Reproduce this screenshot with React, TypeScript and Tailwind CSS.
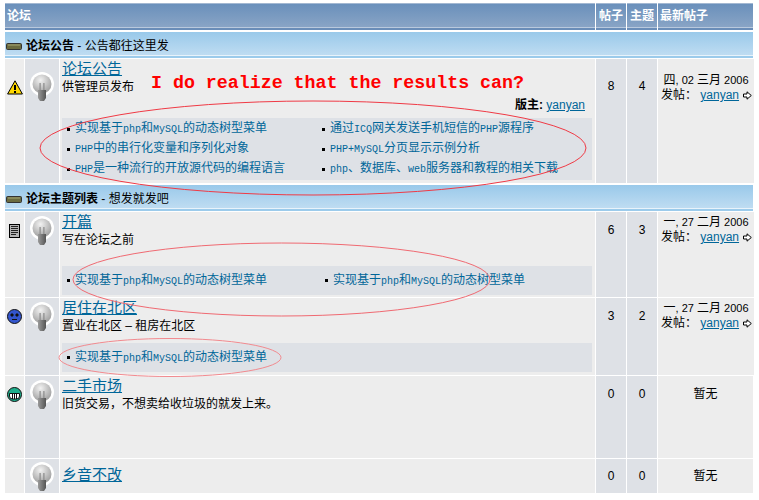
import React from 'react';

const LINK = 'text-[#006699] underline';
const MONO = "'Liberation Mono', monospace";
const HEAD = 'bg-gradient-to-b from-[#6a90bb] to-[#8aa5c6] border-t border-[#a3b8d2] border-b-2 border-b-[#6a8db8] shadow-[inset_0_-1px_0_#b9c9dd]';

// half-width latin next to CJK, like the bitmap font in the screenshot
const Mixed = ({ text }: { text: string }) => (
  <>
    {text.split(/([A-Za-z+]+)/).map((part, i) =>
      /^[A-Za-z+]+$/.test(part) ? (
        <span key={i} className="text-[10px]" style={{ fontFamily: MONO }}>
          {part}
        </span>
      ) : (
        <span key={i}>{part}</span>
      )
    )}
  </>
);

const Bulb = () => (
  <svg width="24" height="30" viewBox="0 0 24 30">
    <defs>
      <radialGradient id="glass" cx="0.42" cy="0.3" r="0.75">
        <stop offset="0" stopColor="#f2f2f2" />
        <stop offset="1" stopColor="#999" />
      </radialGradient>
      <linearGradient id="stem" x1="0" x2="1" y1="0" y2="0">
        <stop offset="0" stopColor="#9a9a9a" />
        <stop offset="1" stopColor="#555" />
      </linearGradient>
    </defs>
    <circle cx="12" cy="12" r="12" fill="#fff" />
    <circle cx="12" cy="12" r="9.5" fill="url(#glass)" />
    <path d="M9.5 11h1.2v7h-1.2zM13.3 11h1.2v7h-1.2z" fill="#8a8a8a" />
    <path d="M8 18h8v8l-2 3h-4l-2-3z" fill="url(#stem)" />
  </svg>
);

const Folder = () => (
  <svg width="16" height="7" viewBox="0 0 16 7" className="shrink-0">
    <rect x="0.5" y="0.5" width="15" height="6" rx="1" fill="#6b6b3f" stroke="#333" />
    <rect x="2" y="1.5" width="12" height="1" fill="#a8a878" />
  </svg>
);

const Warning = () => (
  <svg width="16" height="15" viewBox="0 0 16 15">
    <path d="M8 .8 15.4 14H.6z" fill="#ffd800" stroke="#000" strokeWidth="1" />
    <path d="M7 5h2v5H7zM7 11h2v2H7z" fill="#000" />
  </svg>
);

const Doc = () => (
  <svg width="11" height="14" viewBox="0 0 11 14">
    <rect x="0.5" y="0.5" width="10" height="13" fill="#b5b5b5" stroke="#000" />
    <path d="M2 2.5h7M2 4.5h7M2 6.5h7M2 8.5h7M2 10.5h5" stroke="#222" />
  </svg>
);

const Sad = () => (
  <svg width="15" height="15" viewBox="0 0 15 15">
    <circle cx="7.5" cy="7.5" r="7" fill="#3355cc" stroke="#111" />
    <path d="M4 5h2v2H4zM9 5h2v2H9zM5 10.5h5" fill="#111" stroke="#111" />
  </svg>
);

const Grin = () => (
  <svg width="15" height="15" viewBox="0 0 15 15">
    <circle cx="7.5" cy="7.5" r="7" fill="#1fae8c" stroke="#111" />
    <path d="M2.5 6.5h10v2.5a3 3 0 0 1-3 3h-4a3 3 0 0 1-3-3z" fill="#fff" stroke="#111" />
    <path d="M5.5 6.5v5.5M7.5 6.5v5.5M9.5 6.5v5.5" stroke="#111" />
  </svg>
);

const Arrow = () => (
  <svg width="9" height="9" viewBox="0 0 9 9" className="inline-block ml-1 align-[-1px]">
    <path d="M.5 3h3.5V.8L8.3 4.5 4 8.2V6H.5z" fill="#fff" stroke="#000" />
  </svg>
);

const CatBar = ({ title, desc }: { title: string; desc: string }) => (
  <div className="h-[26px] flex items-center pt-[4px] pl-[1px] gap-1 bg-gradient-to-b from-[#99c9ea] to-[#c0ddf2] border-b-2 border-[#9ccbeb] shadow-[inset_0_-1px_0_#e8f3fb] text-[12px] text-black">
    <Folder />
    <span>
      <b>{title}</b> - {desc}
    </span>
  </div>
);

type Row = {
  h: string;
  icon: React.ReactNode;
  iconTop: string;
  title: string;
  titleTop: string;
  desc?: string;
  mod?: boolean;
  links?: string[];
  linksClass?: string;
  posts: number;
  topics: number;
  numTop: string;
  date?: string;
  dateTop: string;
  bulbTop: string;
};

const DateText = ({ text }: { text: string }) => (
  <>
    {text.split(/([0-9, ]+)/).map((part, i) =>
      /^[0-9, ]+$/.test(part) ? (
        <span key={i} className="text-[11px]">
          {part}
        </span>
      ) : (
        <span key={i}>{part}</span>
      )
    )}
  </>
);

const Last = ({ date, top }: { date?: string; top: string }) =>
  date ? (
    <div className={`${top} pl-[2px] pr-[2px] text-[12px] leading-[15px] text-black`}>
      <div className="text-center">
        <DateText text={date} />
      </div>
      <div className="whitespace-nowrap pl-[1px]">
        发帖： <a className={LINK}>yanyan</a>
        <Arrow />
      </div>
    </div>
  ) : (
    <div className={`${top} text-center text-[12px] text-black`}>暂无</div>
  );

const ForumRow = ({ r }: { r: Row }) => (
  <div className={`grid grid-cols-[19px_34px_535px_30px_30px_1fr] gap-x-[1px] ${r.h}`}>
    <div className={`bg-[#ededed] flex justify-center ${r.iconTop}`}>{r.icon}</div>
    <div className={`bg-[#dee1e6] flex justify-center ${r.bulbTop}`}>
      <Bulb />
    </div>
    <div className={`bg-[#ededed] ${r.titleTop} pl-[2px] pr-[2px] flex flex-col text-[12px] text-black overflow-hidden`}>
      <a className={`${LINK} text-[15px] leading-[18px] self-start`}>{r.title}</a>
      {r.desc && <div className="mt-[2px] leading-[15px]">{r.desc}</div>}
      {r.mod && (
        <div className="mt-[2px] text-right pr-[8px] leading-[16px]">
          <b>版主:</b> <a className={LINK}>yanyan</a>
        </div>
      )}
      {r.links && (
        <div className={`${r.linksClass} grid bg-[#dee1e6] px-[4px] mr-[1px] text-[12px]`}>
          {r.links.map((l, i) => (
            <div key={i} className="flex items-center whitespace-nowrap">
              <span className="w-[3px] h-[3px] bg-black mr-[5px] ml-[1px] shrink-0" />
              <a className="text-[#006699]">
                <Mixed text={l} />
              </a>
            </div>
          ))}
        </div>
      )}
    </div>
    <div className={`bg-[#dee1e6] text-center ${r.numTop} text-[12px] leading-[15px] text-black`}>{r.posts}</div>
    <div className={`bg-[#dee1e6] text-center ${r.numTop} text-[12px] leading-[15px] text-black`}>{r.topics}</div>
    <div className="bg-[#ededed]">
      <Last date={r.date} top={r.dateTop} />
    </div>
  </div>
);

const MENU = '实现基于php和MySQL的动态树型菜单';

const NOTICE: Row = {
  h: 'h-[124px]',
  icon: <Warning />,
  iconTop: 'pt-[21px]',
  title: '论坛公告',
  titleTop: 'pt-[1px]',
  desc: '供管理员发布',
  mod: true,
  linksClass: 'mt-[5px] grid-cols-[255px_1fr] py-[1px] leading-[19px]',
  bulbTop: 'pt-[13px]',
  links: [
    MENU,
    '通过ICQ网关发送手机短信的PHP源程序',
    'PHP中的串行化变量和序列化对象',
    'PHP+MySQL分页显示示例分析',
    'PHP是一种流行的开放源代码的编程语言',
    'php、数据库、web服务器和教程的相关下载',
  ],
  posts: 8,
  topics: 4,
  numTop: 'pt-[20px]',
  date: '四, 02 三月 2006',
  dateTop: 'pt-[14px]',
};

const ROWS: Row[] = [
  { h: 'h-[85px]', icon: <Doc />, iconTop: 'pt-[12px]', title: '开篇', titleTop: 'pt-[1px]', desc: '写在论坛之前', linksClass: 'mt-[18px] grid-cols-[258px_1fr] py-[4.5px] leading-[19px]', bulbTop: 'pt-[4px]', links: [MENU, MENU], posts: 6, topics: 3, numTop: 'pt-[11px]', date: '一, 27 二月 2006', dateTop: 'pt-[3px]' },
  { h: 'h-[77px]', icon: <Sad />, iconTop: 'pt-[11px]', title: '居住在北区', titleTop: 'pt-[1px]', desc: '置业在北区 – 租房在北区', linksClass: 'mt-[9px] grid-cols-[258px_1fr] py-[4.5px] leading-[19px]', bulbTop: 'pt-[4px]', links: [MENU], posts: 3, topics: 2, numTop: 'pt-[11px]', date: '一, 27 二月 2006', dateTop: 'pt-[3px]' },
  { h: 'h-[82px]', icon: <Grin />, iconTop: 'pt-[11px]', title: '二手市场', titleTop: 'pt-[1px]', desc: '旧货交易，不想卖给收垃圾的就发上来。', bulbTop: 'pt-[4px]', posts: 0, topics: 0, numTop: 'pt-[11px]', dateTop: 'pt-[9px]' },
  { h: 'h-[34px]', icon: null, iconTop: 'pt-[11px]', title: '乡音不改', titleTop: 'pt-[7px]', bulbTop: 'pt-[3px]', posts: 0, topics: 0, numTop: 'pt-[10px]', dateTop: 'pt-[8px]' },
];

export default function App() {
  return (
    <div
      className="relative w-[759px] h-[500px] overflow-hidden bg-white pt-[3px] pl-[5px] pr-[6px]"
      style={{ fontFamily: "'Liberation Sans', 'Noto Sans CJK SC', sans-serif" }}
    >
      <div className="grid grid-cols-[590px_30px_30px_1fr] gap-x-[1px] h-[27px] text-[12px] font-bold text-white">
        <div className={`${HEAD} flex items-center pl-[2px]`}>论坛</div>
        <div className={`${HEAD} flex items-center justify-center`}>帖子</div>
        <div className={`${HEAD} flex items-center justify-center`}>主题</div>
        <div className={`${HEAD} flex items-center pl-[2px]`}>最新帖子</div>
      </div>
      <div className="flex flex-col gap-y-[1px] mt-[2px]">
        <CatBar title="论坛公告" desc="公告都往这里发" />
        <ForumRow r={NOTICE} />
        <div className="h-0" />
        <CatBar title="论坛主题列表" desc="想发就发吧" />
        {ROWS.map((r) => (
          <ForumRow key={r.title} r={r} />
        ))}
      </div>

      {/* annotations drawn over the page */}
      <div className="absolute left-[151px] top-[71px] text-[18.3px] font-bold leading-[24px] text-[#ff0000] whitespace-pre" style={{ fontFamily: MONO }}>
        I do realize that the results can?
      </div>
      <svg className="absolute left-0 top-0 pointer-events-none" width="759" height="500" fill="none">
        <ellipse cx="313" cy="148" rx="273" ry="47" stroke="#f03a45" strokeWidth="1" />
        <ellipse cx="281.5" cy="279.5" rx="208.5" ry="36.5" stroke="#f06a72" strokeWidth="1" />
        <ellipse cx="170" cy="357.5" rx="111" ry="19" stroke="#f28a8f" strokeWidth="1" />
      </svg>
    </div>
  );
}
